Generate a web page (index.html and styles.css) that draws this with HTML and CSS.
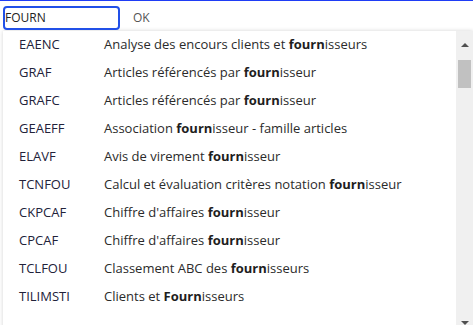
FILE: index.html
```html
<html>
    <head>
        <meta charset="utf-8">
        <title>Recherche</title>
        <link rel="stylesheet" href="styles.css">
    </head>
    <body>
        <div class="page">
            <div class="barre">
                <input class="champ" type="text" value="FOURN">
                <span class="ok">OK</span>
            </div>
            <div class="liste">
                <ul class="lignes">
                    <li><span class="code">EAENC</span><span class="lib">Analyse des encours clients et <b>fourn</b>isseurs</span></li>
                    <li><span class="code">GRAF</span><span class="lib">Articles référencés par <b>fourn</b>isseur</span></li>
                    <li><span class="code">GRAFC</span><span class="lib">Articles référencés par <b>fourn</b>isseur</span></li>
                    <li><span class="code">GEAEFF</span><span class="lib">Association <b>fourn</b>isseur - famille articles</span></li>
                    <li><span class="code">ELAVF</span><span class="lib">Avis de virement <b>fourn</b>isseur</span></li>
                    <li><span class="code">TCNFOU</span><span class="lib">Calcul et évaluation critères notation <b>fourn</b>isseur</span></li>
                    <li><span class="code">CKPCAF</span><span class="lib">Chiffre d'affaires <b>fourn</b>isseur</span></li>
                    <li><span class="code">CPCAF</span><span class="lib">Chiffre d'affaires <b>fourn</b>isseur</span></li>
                    <li><span class="code">TCLFOU</span><span class="lib">Classement ABC des <b>fourn</b>isseurs</span></li>
                    <li><span class="code">TILIMSTI</span><span class="lib">Clients et <b>Fourn</b>isseurs</span></li>
                </ul>
                <div class="ascenseur">
                    <div class="fleche-haut"></div>
                    <div class="curseur"></div>
                    <div class="vide"></div>
                    <div class="fleche-bas"></div>
                </div>
            </div>
        </div>
    </body>
</html>
```

FILE: styles.css
```css
*{
    font-family: 'Open Sans', sans-serif;
    box-sizing: border-box;
}
body{
    margin: 0;
    overflow: hidden;
    background: #ffffff;
}
div.page{
    border-top: 1px solid #1f3df5;
    height: 325px;
}
div.barre{
    display: flex;
    align-items: center;
    height: 30px;
    padding: 3px 0 0 3px;
}
input.champ{
    width: 117px;
    height: 24px;
    border: 2px solid #2150e8;
    border-radius: 4px;
    padding: 0;
    font-size: 12px;
    color: #222;
    outline: none;
}
span.ok{
    margin-left: 13px;
    font-size: 12px;
    color: #555;
}
div.liste{
    display: flex;
    margin-left: 3px;
    height: 300px;
    box-shadow: 0 0 4px rgba(0, 0, 0, 0.18);
}
ul.lignes{
    flex-grow: 1;
    list-style: none;
    margin: 0;
    padding: 0;
    overflow: hidden;
}
ul.lignes li{
    display: flex;
    align-items: center;
    height: 28px;
    margin-top: -1px;
    margin-bottom: 1px;
    font-size: 13px;
    color: #2b2b2b;
}
span.code{
    width: 101px;
    padding-left: 16px;
    color: #22223a;
}
span.lib b{
    font-weight: 700;
    color: #1e1e1e;
}
div.ascenseur{
    display: flex;
    flex-direction: column;
    align-items: center;
    width: 17px;
    background: #f0f0f0;
}
div.fleche-haut{
    margin-top: 12px;
    width: 0;
    height: 0;
    border-left: 4px solid transparent;
    border-right: 4px solid transparent;
    border-bottom: 4px solid #505050;
}
div.curseur{
    margin-top: 13px;
    width: 13px;
    height: 28px;
    background: #c1c1c1;
}
div.vide{
    flex-grow: 1;
}
div.fleche-bas{
    margin-bottom: 6px;
    width: 0;
    height: 0;
    border-left: 4px solid transparent;
    border-right: 4px solid transparent;
    border-top: 4px solid #505050;
}
```
